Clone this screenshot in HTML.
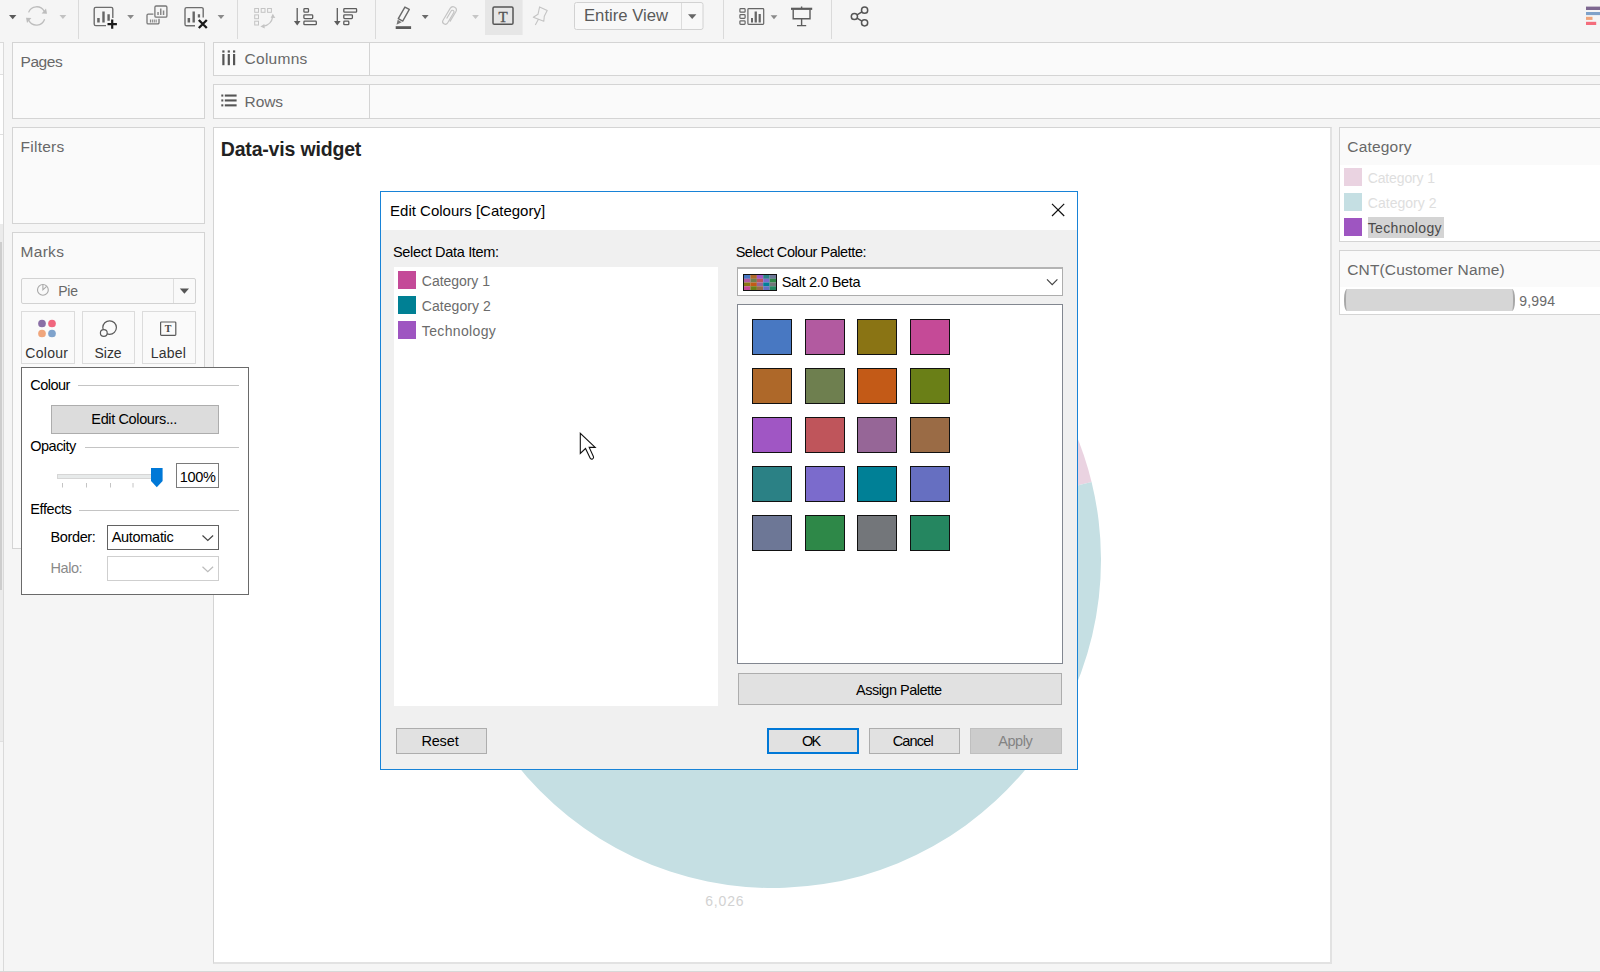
<!DOCTYPE html>
<html><head><meta charset="utf-8"><title>Data-vis widget</title>
<style>
*{box-sizing:border-box;margin:0;padding:0}
html,body{width:1600px;height:972px;overflow:hidden;background:#f5f5f5;font-family:"Liberation Sans",sans-serif;}
.a{position:absolute}
.t{position:absolute;white-space:nowrap;line-height:1}
.card{position:absolute;background:#fafafa;border:1px solid #d4d4d4}
.btn{position:absolute;background:#e1e1e1;border:1px solid #adadad}
svg{position:absolute;overflow:visible}
</style></head><body>
<div class="a" id="toolbar" style="left:0;top:0;width:1600px;height:42px;background:#f5f5f5">
<svg id="tbsvg" width="1600" height="42" style="left:0;top:0" viewBox="0 0 1600 42">
<g fill="none" stroke-linecap="butt">
<!-- dropdown arrows -->
<path d="M9 15h7.4l-3.7 4.2z" fill="#5a5a5a"/>
<path d="M59.5 15h6.8l-3.4 4z" fill="#c2c2c2"/>
<path d="M127.2 15h6.8l-3.4 4z" fill="#8a8a8a"/>
<path d="M217.6 15h6.8l-3.4 4z" fill="#8a8a8a"/>
<path d="M421.8 15h6.8l-3.4 4z" fill="#6a6a6a"/>
<path d="M472.1 15h6.8l-3.4 4z" fill="#c6c6c6"/>
<path d="M770.6 15.2h6.8l-3.4 4z" fill="#8a8a8a"/>
<!-- separators -->
<path d="M78.5 0v39M237.5 0v39M375.5 0v39M723.5 0v39M831.5 0v39" stroke="#dadada" stroke-width="1"/>
<!-- refresh -->
<g stroke="#bdbdbd" stroke-width="1.3">
<path d="M28.6 12.4A8.6 8.6 0 0 1 44.2 11.2"/>
<path d="M44.6 19.2A8.6 8.6 0 0 1 28.8 20.4"/>
</g>
<path d="M41.6 13.6l5.4 0.2l-1-5.2z" fill="#bdbdbd"/>
<path d="M31.4 18l-5.4 -0.2l1 5.2z" fill="#bdbdbd"/>
<!-- new worksheet -->
<path d="M112.8 18V9a1.6 1.6 0 0 0-1.6-1.6H95.8a1.6 1.6 0 0 0-1.6 1.6v15a1.6 1.6 0 0 0 1.6 1.6H106" stroke="#6e6e6e" stroke-width="1.4"/>
<path d="M97.2 18h2.5v4.6h-2.5zM102.3 11.6h2.4v11h-2.4zM107.4 14.2h2.4v6.6h-2.4z" fill="#666"/>
<path d="M112.2 19.4v9.4M107.5 24.1h9.4" stroke="#1a1a1a" stroke-width="2.2"/>
<!-- duplicate -->
<g stroke="#777" stroke-width="1.3">
<rect x="154.9" y="6" width="12" height="11.2" rx="1.2"/>
<path d="M153.4 14.1h-5.2a1.2 1.2 0 0 0-1.2 1.2v7.4a1.2 1.2 0 0 0 1.2 1.2h9.6a1.2 1.2 0 0 0 1.2-1.2v-4"/>
</g>
<path d="M157.3 12h1.5v3h-1.5zM160 8.6h1.5v6.4h-1.5zM162.8 10.6h1.5v4.4h-1.5z" fill="#888"/>
<path d="M149.9 19.4h1.1v3.2h-1.1zM151.8 19.4h1.1v3.2h-1.1zM153.7 19.4h1.1v3.2h-1.1zM155.6 19.4h1.1v3.2h-1.1z" fill="#888"/>
<!-- clear sheet -->
<path d="M203.2 17.5V9.2a1.6 1.6 0 0 0-1.6-1.6H186.6a1.6 1.6 0 0 0-1.6 1.6v15a1.6 1.6 0 0 0 1.6 1.6h8.4" stroke="#6e6e6e" stroke-width="1.4"/>
<path d="M187.6 18h2.5v4.6h-2.5zM192.5 11.6h2.4v11h-2.4zM197.8 14.2h2.3v3.4h-2.3z" fill="#666"/>
<path d="M198.8 20l8 8M206.8 20l-8 8" stroke="#1a1a1a" stroke-width="2.3"/>
<!-- swap -->
<g stroke="#c4c4c4" stroke-width="1">
<rect x="254.7" y="8.5" width="3.8" height="3.8"/><rect x="261.2" y="8.5" width="3.8" height="3.8"/><rect x="267.6" y="8.5" width="3.8" height="3.8"/>
<rect x="254.7" y="14.9" width="3.8" height="3.8"/><rect x="254.7" y="21.2" width="3.8" height="3.8"/>
<path d="M263.5 26.2Q271.5 24.6 272.6 17" stroke-width="1.3"/>
</g>
<path d="M260.4 26.6l4-2.6l0.3 4.6z" fill="#c4c4c4"/><path d="M272.8 13.8l2.5 4.2l-4.6-0.2z" fill="#c4c4c4"/>
<!-- sort asc -->
<g stroke="#5c5c5c" stroke-width="1.3">
<path d="M297.2 8v14"/>
<rect x="303.9" y="8.6" width="4.6" height="3.6" rx="0.8"/><rect x="303.9" y="14.8" width="8.8" height="3.8" rx="0.8"/><rect x="303.9" y="21.1" width="12.4" height="3.6" rx="0.8"/>
<path d="M337.3 8v14"/>
<rect x="343.8" y="8.6" width="12.8" height="3.6" rx="0.8"/><rect x="343.8" y="14.8" width="8.6" height="3.8" rx="0.8"/><rect x="343.8" y="21.1" width="5" height="3.6" rx="0.8"/>
</g>
<path d="M293.9 21h6.6l-3.3 4.4z" fill="#5c5c5c"/><path d="M334 21h6.6l-3.3 4.4z" fill="#5c5c5c"/>
<!-- highlighter -->
<path d="M395.700 27.600h15.400" stroke="#5a5a5a" stroke-width="2.800"/>
<path d="M404.900 7.100L409.300 9.400L402.700 21.100L398.300 18.700Z" stroke="#6a6a6a" stroke-width="1.400" stroke-linejoin="round"/>
<path d="M397.700 19.800L401.700 22.300L396.500 24.700Z" fill="#777" stroke="none"/>
<!-- paperclip -->
<path transform="translate(449.600 15.700) rotate(31) scale(1.100)" d="M3 4.500V-6A3 3 0 0 0-3-6V6.600A2.400 2.400 0 0 0 1.800 6.600V-4.400A1.400 1.400 0 0 0-1-4.400V3.500" stroke="#c4c4c4" stroke-width="1.050"/>
<!-- T -->
<rect x="485" y="0" width="37.600" height="35" fill="#e6e6e6"/>
<rect x="493" y="7" width="20" height="17.200" rx="1.300" stroke="#555" stroke-width="1.500"/>
<!-- pin -->
<path d="M539.6 6.900L547.200 10.600L544.300 16.200L543.800 21.300L533.300 17.200L538 14.300ZM538.300 19.400L535.300 25" stroke="#c4c4c4" stroke-width="1.100" stroke-linejoin="round"/>
<!-- Entire view box -->
<rect x="574.500" y="2.500" width="128.500" height="27" rx="2" fill="#f8f8f8" stroke="#d2d2d2"/>
<path d="M681.500 3v26" stroke="#dcdcdc"/>
<path d="M688 14.200h8.400l-4.200 4.800z" fill="#666"/>
<!-- show me cards -->
<g stroke="#666" stroke-width="1.200">
<rect x="739.900" y="8.600" width="5.200" height="3.600" rx="0.800"/><rect x="739.900" y="14.700" width="5.200" height="3.600" rx="0.800"/><rect x="739.900" y="20.800" width="5.200" height="3.600" rx="0.800"/>
<rect x="747.900" y="8.600" width="15.800" height="15.800" rx="0.800"/>
</g>
<path d="M751 18h2v4.600h-2zM754.600 11.400h2.300v11.200h-2.300zM758.600 14h2.200v8.600h-2.200z" fill="#666"/>
<!-- presentation -->
<path d="M791 8.800h21.200" stroke="#5c5c5c" stroke-width="2.200"/>
<path d="M801.600 6.400v2M793.200 9.500v9.200h16.800V9.500M801.600 18.700v7M797 25.600h9.200" stroke="#5c5c5c" stroke-width="1.400"/>
<!-- share -->
<g stroke="#555" stroke-width="1.500">
<circle cx="854.400" cy="16.500" r="3.100"/><circle cx="864.600" cy="10.200" r="3.100"/><circle cx="864.600" cy="22.800" r="3.100"/>
<path d="M857.100 14.800l4.800-3M857.100 18.200l4.800 3"/>
</g>
</g>
<!-- show me -->
<rect x="1586" y="6.600" width="14" height="3.400" fill="#7d6790"/><rect x="1586" y="12" width="14" height="3.100" fill="#7fa2c9"/><rect x="1586" y="16.800" width="6.500" height="3.100" fill="#f0a47a"/><rect x="1586" y="21.800" width="10.200" height="3.200" fill="#f46d7c"/>
<text x="503.100" y="21.500" text-anchor="middle" font-family="'Liberation Serif',serif" font-size="15" fill="#555" stroke="#555" stroke-width="0.350">T</text>
<text x="584" y="21.200" font-family="'Liberation Sans',sans-serif" font-size="16" fill="#5a5a5a" textLength="84" lengthAdjust="spacingAndGlyphs">Entire View</text>
</svg>
</div>
<div class="a" id="lstrip" style="left:0;top:42px;width:4px;height:930px;background:#fff;border-right:1px solid #dadada;border-top:1px solid #dadada">
<div class="a" style="left:0;top:0;width:3px;height:31px;background:#fafafa"></div>
<div class="a" style="left:0;top:31px;width:3px;height:1px;background:#e0e0e0"></div>
<div class="a" style="left:0;top:91px;width:3px;height:1px;background:#e0e0e0"></div>
<div class="a" style="left:0;top:181px;width:3px;height:517px;background:#ebebeb"></div>
<div class="a" style="left:0;top:199px;width:2px;height:348px;background:#cdcdcd"></div>
<div class="a" style="left:0;top:698px;width:3px;height:1px;background:#e0e0e0"></div>
<div class="a" style="left:0;top:699px;width:3px;height:240px;background:#f6f6f6"></div>
</div>
<div class="card" style="left:12px;top:42px;width:193px;height:77px"></div>
<div class="t" style="left:20.57px;top:53.78px;font-size:15.5px;color:#686868;letter-spacing:-0.451px;">Pages</div>
<div class="card" style="left:12px;top:127px;width:193px;height:97px"></div>
<div class="t" style="left:20.57px;top:138.78px;font-size:15.5px;color:#686868;letter-spacing:0.241px;">Filters</div>
<div class="card" style="left:12px;top:232px;width:193px;height:317px"></div>
<div class="t" style="left:20.57px;top:243.78px;font-size:15.5px;color:#686868;letter-spacing:0.287px;">Marks</div>
<div class="card" style="left:213px;top:42px;width:1400px;height:34px"></div>
<div class="a" style="left:369px;top:43px;width:1px;height:32px;background:#d4d4d4"></div>
<div class="t" style="left:244.57px;top:50.78px;font-size:15.5px;color:#686868;letter-spacing:0.263px;">Columns</div>
<div class="card" style="left:213px;top:84px;width:1400px;height:35px"></div>
<div class="a" style="left:369px;top:85px;width:1px;height:33px;background:#d4d4d4"></div>
<div class="t" style="left:244.57px;top:93.78px;font-size:15.5px;color:#686868;letter-spacing:-0.072px;">Rows</div>
<svg width="20" height="20" style="left:220px;top:48px" viewBox="220 48 20 20"><g fill="#555">
<rect x="222.300" y="50.400" width="2.200" height="2.200"/><rect x="222.300" y="54" width="2.200" height="11.200"/>
<rect x="227.700" y="50.400" width="2.200" height="2.200"/><rect x="227.700" y="54" width="2.200" height="11.200"/>
<rect x="233" y="50.400" width="2.200" height="2.200"/><rect x="233" y="54" width="2.200" height="11.200"/>
</g></svg>
<svg width="20" height="20" style="left:220px;top:92px" viewBox="220 92 20 20"><g fill="#555">
<rect x="221.300" y="94.500" width="2" height="2.100"/><rect x="224.800" y="94.500" width="11.800" height="2.100"/>
<rect x="221.300" y="99.400" width="2" height="2.100"/><rect x="224.800" y="99.400" width="11.800" height="2.100"/>
<rect x="221.300" y="104.300" width="2" height="2.100"/><rect x="224.800" y="104.300" width="11.800" height="2.100"/>
</g></svg>
<div class="a" id="viz" style="left:213px;top:127px;width:1119px;height:837px;background:#fff;border:1px solid #d4d4d4;border-right:2px solid #e2e2e2;border-bottom:2px solid #e2e2e2"></div>
<svg width="1600" height="972" style="left:0;top:0" viewBox="0 0 1600 972"><path d="M773 560L773.00 232.00A328 328 0 0 1 1091.57 481.93Z" fill="#ead3e1"/><path d="M773 560L1091.57 481.93A328 328 0 1 1 471.52 430.79Z" fill="#c5dfe3"/><path d="M773 560L471.52 430.79A328 328 0 0 1 773.00 232.00Z" fill="#9e55c1"/></svg>
<div class="t" style="left:220.73px;top:140.28px;font-size:19.5px;color:#222;letter-spacing:-0.171px;font-weight:bold;">Data-vis widget</div>
<div class="t" style="left:705.16px;top:894.03px;font-size:14px;color:#d2d2d2;letter-spacing:0.838px;">6,026</div>
<div class="card" id="leg1" style="left:1339px;top:127px;width:270px;height:115px"><div class="a" style="left:0;top:37px;width:270px;height:76px;background:#fff"></div></div>
<div class="t" style="left:1347.27px;top:138.78px;font-size:15.5px;color:#686868;letter-spacing:0.192px;">Category</div>
<div class="a" style="left:1344px;top:168.0px;width:18px;height:18px;background:#ead3e1"></div>
<div class="t" style="left:1367.76px;top:171.03px;font-size:14px;color:#dedede;letter-spacing:-0.143px;">Category 1</div>
<div class="a" style="left:1344px;top:193.0px;width:18px;height:18px;background:#c5dfe3"></div>
<div class="t" style="left:1367.76px;top:196.03px;font-size:14px;color:#dedede;letter-spacing:0.035px;">Category 2</div>
<div class="a" style="left:1368px;top:217px;width:76px;height:21px;background:#d4d4d4"></div>
<div class="a" style="left:1344px;top:218.0px;width:18px;height:18px;background:#9e55c1"></div>
<div class="t" style="left:1367.76px;top:221.03px;font-size:14px;color:#4a4a4a;letter-spacing:0.330px;">Technology</div>
<div class="card" id="leg2" style="left:1339px;top:250px;width:270px;height:65px"><div class="a" style="left:0;top:36px;width:270px;height:27px;background:#fff"></div></div>
<div class="t" style="left:1347.27px;top:261.78px;font-size:15.5px;color:#686868;letter-spacing:0.137px;">CNT(Customer Name)</div>
<div class="a" style="left:1344px;top:289px;width:171px;height:22px;background:#d6d6d6;border-left:2px solid #a8a8a8;border-right:2px solid #a8a8a8;border-radius:3px/10px"></div>
<div class="t" style="left:1519.36px;top:294.03px;font-size:14px;color:#6a6a6a;letter-spacing:0.138px;">9,994</div>
<div class="a" style="left:21px;top:278px;width:175px;height:26px;background:#f9f9f9;border:1px solid #d2d2d2;border-radius:2px"></div>
<div class="a" style="left:173px;top:279px;width:1px;height:24px;background:#dedede"></div>
<svg width="180" height="30" style="left:20px;top:276px" viewBox="20 276 180 30">
<circle cx="42.9" cy="289.9" r="5.4" fill="none" stroke="#a8a8a8" stroke-width="1.100"/><path d="M42.9 284.6v5.2l3.7-3.5" fill="none" stroke="#a8a8a8" stroke-width="1.100"/>
<path d="M179.800 288.600h9.200l-4.600 5.200z" fill="#555"/></svg>
<div class="t" style="left:58.16px;top:284.03px;font-size:14px;color:#686868;letter-spacing:-0.217px;">Pie</div>
<div class="a" style="left:21px;top:311px;width:54px;height:53px;background:#fafafa;border:1px solid #dcdcdc"></div>
<div class="a" style="left:82px;top:311px;width:53px;height:53px;background:#fafafa;border:1px solid #dcdcdc"></div>
<div class="a" style="left:142px;top:311px;width:54px;height:53px;background:#fafafa;border:1px solid #dcdcdc"></div>
<svg width="180" height="30" style="left:20px;top:315px" viewBox="20 315 180 30">
<circle cx="42" cy="323.500" r="3.85" fill="#8a6fa6"/><circle cx="52" cy="323.500" r="3.85" fill="#f0667e"/>
<circle cx="42" cy="333.500" r="3.85" fill="#f0a67c"/><circle cx="52" cy="333.500" r="3.85" fill="#7fa3cc"/>
<circle cx="109.600" cy="327.600" r="6.800" fill="none" stroke="#5a5a5a" stroke-width="1.200"/>
<circle cx="103.800" cy="333" r="3.400" fill="#fafafa" stroke="#5a5a5a" stroke-width="1.200"/>
<rect x="160.600" y="322" width="15.200" height="13.400" rx="0.800" fill="none" stroke="#5a5a5a" stroke-width="1.200"/>
<text x="168.200" y="332.400" text-anchor="middle" font-family="'Liberation Serif',serif" font-weight="bold" font-size="10" fill="#444">T</text>
</svg>
<div class="t" style="left:25.36px;top:346.03px;font-size:14px;color:#333;letter-spacing:0.270px;">Colour</div>
<div class="t" style="left:94.46px;top:346.03px;font-size:14px;color:#333;letter-spacing:-0.011px;">Size</div>
<div class="t" style="left:150.66px;top:346.03px;font-size:14px;color:#333;letter-spacing:0.209px;">Label</div>
<div class="a" id="popup" style="left:21px;top:367px;width:228px;height:228px;background:#fff;border:1px solid #6a6a6a"></div>
<div class="t" style="left:30.33px;top:377.78px;font-size:14.5px;color:#000;letter-spacing:-0.554px;">Colour</div>
<div class="a" style="left:78px;top:385px;width:161px;height:1px;background:#c4c4c4"></div>
<div class="btn" style="left:51px;top:405px;width:168px;height:29px;background:#dcdcdc"></div>
<div class="t" style="left:91.33px;top:411.78px;font-size:14.5px;color:#000;letter-spacing:-0.366px;">Edit Colours...</div>
<div class="t" style="left:30.33px;top:438.78px;font-size:14.5px;color:#000;letter-spacing:-0.529px;">Opacity</div>
<div class="a" style="left:85px;top:447px;width:154px;height:1px;background:#c4c4c4"></div>
<svg width="180" height="30" style="left:50px;top:462px" viewBox="50 462 180 30">
<rect x="57.500" y="474.500" width="104" height="4" fill="#e7eaea" stroke="#d6d6d6" stroke-width="1"/>
<path d="M62.500 483v4.500M86.500 483v4.500M110.500 483v4.500M133 483v4.500" stroke="#c4c4c4" stroke-width="1"/>
<path d="M151 468h11.600v13l-5.800 6.200l-5.800-6.200z" fill="#0078d7"/>
</svg>
<div class="a" style="left:176px;top:463px;width:43px;height:25px;background:#fff;border:1px solid #7a7a7a"></div>
<div class="t" style="left:179.83px;top:469.78px;font-size:14.5px;color:#000;letter-spacing:-0.365px;">100%</div>
<div class="t" style="left:30.33px;top:501.78px;font-size:14.5px;color:#000;letter-spacing:-0.427px;">Effects</div>
<div class="a" style="left:79px;top:510px;width:160px;height:1px;background:#c4c4c4"></div>
<div class="t" style="left:50.53px;top:529.78px;font-size:14.5px;color:#000;letter-spacing:-0.377px;">Border:</div>
<div class="a" style="left:107px;top:525px;width:112px;height:25px;background:#fff;border:1px solid #626262"></div>
<div class="t" style="left:111.63px;top:529.78px;font-size:14.5px;color:#000;letter-spacing:-0.286px;">Automatic</div>
<div class="t" style="left:50.53px;top:560.78px;font-size:14.5px;color:#8a8a8a;letter-spacing:-0.452px;">Halo:</div>
<div class="a" style="left:107px;top:556px;width:112px;height:25px;background:#fff;border:1px solid #cfcfcf"></div>
<svg width="30" height="60" style="left:195px;top:525px" viewBox="195 525 30 60">
<path d="M202.500 535.500l5.300 5l5.300-5" fill="none" stroke="#444" stroke-width="1.200"/>
<path d="M202.500 566.800l5.300 5l5.300-5" fill="none" stroke="#bcbcbc" stroke-width="1.200"/></svg>
<div class="a" id="dialog" style="left:380px;top:191px;width:698px;height:579px;background:#f0f0f0;border:1px solid #1883d7"><div class="a" style="left:0;top:0;width:696px;height:38px;background:#fff"></div></div>
<div class="t" style="left:390.10px;top:203.03px;font-size:15px;color:#000;letter-spacing:-0.004px;">Edit Colours [Category]</div>
<svg width="20" height="20" style="left:1048px;top:200px" viewBox="1048 200 20 20"><path d="M1052 203.800l12.200 12.200M1064.200 203.800l-12.200 12.200" stroke="#111" stroke-width="1.200" fill="none"/></svg>
<div class="t" style="left:393.03px;top:244.78px;font-size:14.5px;color:#000;letter-spacing:-0.323px;">Select Data Item:</div>
<div class="a" style="left:394px;top:267px;width:324px;height:439px;background:#fff"></div>
<div class="a" style="left:398px;top:271px;width:18px;height:18px;background:#c44a98"></div>
<div class="t" style="left:421.86px;top:274.03px;font-size:14px;color:#6b6b6b;letter-spacing:-0.043px;">Category 1</div>
<div class="a" style="left:398px;top:296px;width:18px;height:18px;background:#008094"></div>
<div class="t" style="left:421.86px;top:299.03px;font-size:14px;color:#6b6b6b;letter-spacing:0.046px;">Category 2</div>
<div class="a" style="left:398px;top:321px;width:18px;height:18px;background:#9e55c1"></div>
<div class="t" style="left:421.86px;top:324.03px;font-size:14px;color:#6b6b6b;letter-spacing:0.341px;">Technology</div>
<div class="t" style="left:735.63px;top:244.78px;font-size:14.5px;color:#000;letter-spacing:-0.443px;">Select Colour Palette:</div>
<div class="a" style="left:737px;top:267px;width:326px;height:29px;background:#fff;border:1px solid #adadad;border-top:2px solid #b4b4b4"></div>
<svg width="40" height="24" style="left:740px;top:270px" viewBox="740 270 40 24"><rect x="744.00" y="275.00" width="6.50" height="3.85" fill="#4878c2"/><rect x="744.00" y="278.75" width="6.50" height="3.85" fill="#b25aa0"/><rect x="744.00" y="282.50" width="6.50" height="3.85" fill="#8a7414"/><rect x="744.00" y="286.25" width="6.50" height="3.85" fill="#c54a97"/><rect x="750.40" y="275.00" width="6.50" height="3.85" fill="#ae6829"/><rect x="750.40" y="278.75" width="6.50" height="3.85" fill="#6e7f4f"/><rect x="750.40" y="282.50" width="6.50" height="3.85" fill="#c35a17"/><rect x="750.40" y="286.25" width="6.50" height="3.85" fill="#6a7f17"/><rect x="756.80" y="275.00" width="6.50" height="3.85" fill="#a056c4"/><rect x="756.80" y="278.75" width="6.50" height="3.85" fill="#bf555b"/><rect x="756.80" y="282.50" width="6.50" height="3.85" fill="#966697"/><rect x="756.80" y="286.25" width="6.50" height="3.85" fill="#9a6b45"/><rect x="763.20" y="275.00" width="6.50" height="3.85" fill="#2b8185"/><rect x="763.20" y="278.75" width="6.50" height="3.85" fill="#7b6bcc"/><rect x="763.20" y="282.50" width="6.50" height="3.85" fill="#008096"/><rect x="763.20" y="286.25" width="6.50" height="3.85" fill="#666fc1"/><rect x="769.60" y="275.00" width="6.50" height="3.85" fill="#6d7796"/><rect x="769.60" y="278.75" width="6.50" height="3.85" fill="#2e8848"/><rect x="769.60" y="282.50" width="6.50" height="3.85" fill="#73767a"/><rect x="769.60" y="286.25" width="6.50" height="3.85" fill="#258660"/><rect x="743.500" y="274.500" width="33" height="16" fill="none" stroke="#111" stroke-width="1"/></svg>
<div class="t" style="left:781.73px;top:274.78px;font-size:14.5px;color:#000;letter-spacing:-0.348px;">Salt 2.0 Beta</div>
<svg width="20" height="20" style="left:1042px;top:272px" viewBox="1042 272 20 20"><path d="M1047 279.400l5.200 5.200l5.200-5.200" fill="none" stroke="#444" stroke-width="1.200"/></svg>
<div class="a" style="left:737px;top:304px;width:326px;height:360px;background:#fff;border:1px solid #828790"></div>
<div class="a" style="left:752px;top:319px;width:40px;height:36px;background:#4878c2;border:1px solid #111"></div>
<div class="a" style="left:805px;top:319px;width:40px;height:36px;background:#b25aa0;border:1px solid #111"></div>
<div class="a" style="left:857px;top:319px;width:40px;height:36px;background:#8a7414;border:1px solid #111"></div>
<div class="a" style="left:910px;top:319px;width:40px;height:36px;background:#c54a97;border:1px solid #111"></div>
<div class="a" style="left:752px;top:368px;width:40px;height:36px;background:#ae6829;border:1px solid #111"></div>
<div class="a" style="left:805px;top:368px;width:40px;height:36px;background:#6e7f4f;border:1px solid #111"></div>
<div class="a" style="left:857px;top:368px;width:40px;height:36px;background:#c35a17;border:1px solid #111"></div>
<div class="a" style="left:910px;top:368px;width:40px;height:36px;background:#6a7f17;border:1px solid #111"></div>
<div class="a" style="left:752px;top:417px;width:40px;height:36px;background:#a056c4;border:1px solid #111"></div>
<div class="a" style="left:805px;top:417px;width:40px;height:36px;background:#bf555b;border:1px solid #111"></div>
<div class="a" style="left:857px;top:417px;width:40px;height:36px;background:#966697;border:1px solid #111"></div>
<div class="a" style="left:910px;top:417px;width:40px;height:36px;background:#9a6b45;border:1px solid #111"></div>
<div class="a" style="left:752px;top:466px;width:40px;height:36px;background:#2b8185;border:1px solid #111"></div>
<div class="a" style="left:805px;top:466px;width:40px;height:36px;background:#7b6bcc;border:1px solid #111"></div>
<div class="a" style="left:857px;top:466px;width:40px;height:36px;background:#008096;border:1px solid #111"></div>
<div class="a" style="left:910px;top:466px;width:40px;height:36px;background:#666fc1;border:1px solid #111"></div>
<div class="a" style="left:752px;top:515px;width:40px;height:36px;background:#6d7796;border:1px solid #111"></div>
<div class="a" style="left:805px;top:515px;width:40px;height:36px;background:#2e8848;border:1px solid #111"></div>
<div class="a" style="left:857px;top:515px;width:40px;height:36px;background:#73767a;border:1px solid #111"></div>
<div class="a" style="left:910px;top:515px;width:40px;height:36px;background:#258660;border:1px solid #111"></div>
<div class="btn" style="left:738px;top:673px;width:324px;height:32px"></div>
<div class="t" style="left:856.03px;top:682.78px;font-size:14.5px;color:#000;letter-spacing:-0.512px;">Assign Palette</div>
<div class="btn" style="left:396px;top:728px;width:91px;height:26px"></div>
<div class="t" style="left:421.38px;top:733.78px;font-size:14.5px;color:#000;letter-spacing:-0.148px;">Reset</div>
<div class="btn" style="left:767px;top:728px;width:92px;height:26px;border:2px solid #0078d7"></div>
<div class="t" style="left:801.93px;top:733.78px;font-size:14.5px;color:#000;letter-spacing:-1.703px;">OK</div>
<div class="btn" style="left:869px;top:728px;width:91px;height:26px"></div>
<div class="t" style="left:892.63px;top:733.78px;font-size:14.5px;color:#000;letter-spacing:-0.798px;">Cancel</div>
<div class="btn" style="left:970px;top:728px;width:92px;height:26px;background:#cccccc;border-color:#bfbfbf"></div>
<div class="t" style="left:998.23px;top:733.78px;font-size:14.5px;color:#838383;letter-spacing:-0.433px;">Apply</div>
<svg width="24" height="32" style="left:576px;top:430px" viewBox="576 430 24 32"><path d="M580.300 433.300v20.200l5.200-5l4.600 9.600a1.800 1.800 0 0 0 3.300-1.500l-4.200-9.200h6z" fill="#fff" stroke="#111" stroke-width="1.100" stroke-linejoin="miter"/></svg>
<div class="a" style="left:0;top:971px;width:1600px;height:1px;background:#d8d8d8"></div>
</body></html>
